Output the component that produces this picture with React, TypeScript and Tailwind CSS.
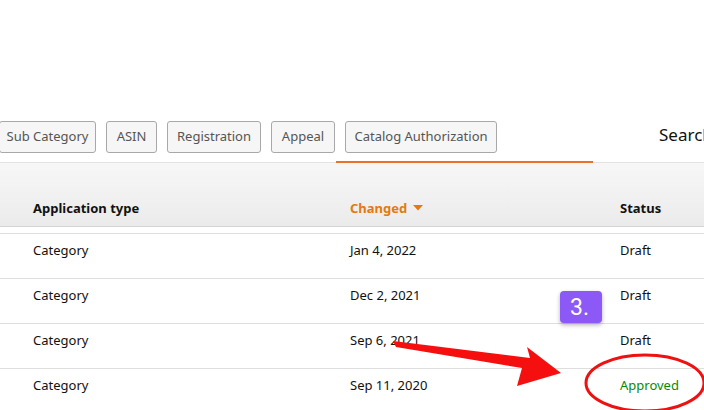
import React from "react";

const font = { fontFamily: '"Noto Sans", "Open Sans", Arial, sans-serif' };

function Tab({ label, className = "" }: { label: string; className?: string }) {
  return (
    <div
      className={`h-[32px] flex items-center border border-[#a8a8a8] rounded-[3px] bg-[#f6f6f6] text-[13px] text-[#555] whitespace-nowrap ${className}`}
    >
      {label}
    </div>
  );
}

const rows = [
  { type: "Category", date: "Jan 4, 2022", status: "Draft" },
  { type: "Category", date: "Dec 2, 2021", status: "Draft" },
  { type: "Category", date: "Sep 6, 2021", status: "Draft" },
  { type: "Category", date: "Sep 11, 2020", status: "Approved" },
];

export default function App() {
  return (
    <div className="relative w-[704px] h-[410px] overflow-hidden bg-white" style={font}>
      <div className="h-[121px]" />
      {/* Tabs row */}
      <div className="flex items-start border-b border-[#e3e3e3] h-[42px] w-[760px]">
        <div className="flex items-start gap-[10px] ml-[-1px]">
          <Tab label="Sub Category" className="w-[97px] justify-center" />
          <Tab label="ASIN" className="w-[51px] justify-center" />
          <Tab label="Registration" className="w-[94px] justify-center" />
          <Tab label="Appeal" className="w-[64px] justify-center" />
        </div>
        <div className="ml-[1px] w-[257px] h-[42px] border-b-2 border-[#e8722a] pl-[9px]">
          <Tab label="Catalog Authorization" className="w-[152px] justify-center" />
        </div>
        <div className="ml-[66px] mt-[2px] text-[17px] text-[#111] leading-[24px] whitespace-nowrap">Search</div>
      </div>
      {/* Header */}
      <div className="h-[64px] bg-gradient-to-b from-[#f7f7f7] to-[#ebebeb] border-b border-[#d4d4d4] flex items-end pb-[8px] text-[13px] font-bold text-[#111]">
        <div className="w-[350px] pl-[33px]">Application type</div>
        <div className="w-[270px] text-[#e47911] flex items-center gap-[6px]">
          Changed
          <svg width="10" height="6" viewBox="0 0 10 6">
            <path d="M0 0 L10 0 L5 5.5 Z" fill="#e47911" />
          </svg>
        </div>
        <div>Status</div>
      </div>
      <div className="h-[6px]" />
      {/* Rows */}
      {rows.map((r, i) => (
        <div
          key={i}
          className="h-[45px] border-t border-[#dedede] flex items-start pt-[7px] text-[13px] text-[#111]"
        >
          <div className="w-[350px] pl-[33px]">{r.type}</div>
          <div className="w-[270px]">{r.date}</div>
          <div className={r.status === "Approved" ? "text-[#078a07]" : ""}>{r.status}</div>
        </div>
      ))}

      {/* Badge */}
      <div
        className="absolute left-[560px] top-[291px] w-[42px] h-[32px] rounded-[4px] bg-[#8c58f6] shadow-[0_2px_4px_rgba(0,0,0,0.3)] flex items-center justify-center text-white text-[23px] leading-none pr-[3px]"
        style={{ fontFamily: 'Roboto, "Noto Sans", sans-serif' }}
      >
        3.
      </div>

      {/* Annotation overlay */}
      <svg className="absolute left-0 top-0 pointer-events-none" width="704" height="410" viewBox="0 0 704 410">
        <polygon
          points="393,341 530,358 527,347 561,373 517,386 522,368 396,347"
          fill="#f50f0f"
        />
        <ellipse cx="645" cy="383" rx="59" ry="28" fill="none" stroke="#ee1111" strokeWidth="3" />
      </svg>
    </div>
  );
}
